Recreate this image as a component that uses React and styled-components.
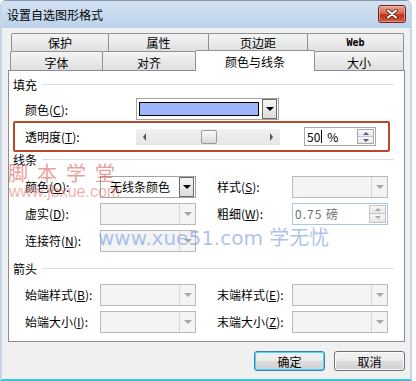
import React from 'react';
import styled, { createGlobalStyle, css } from 'styled-components';

const GlobalStyle = createGlobalStyle`
  html, body {
    margin: 0;
    padding: 0;
    background: #fff;
  }
  body {
    font-family: "Noto Sans CJK SC", "Liberation Sans", sans-serif;
    font-size: 12px;
    color: #000;
  }
  u {
    text-decoration: underline;
    text-underline-offset: 1px;
  }
`;

const Window = styled.div`
  position: relative;
  width: 412px;
  height: 381px;
  box-sizing: border-box;
  display: flex;
  flex-direction: column;
  background: #f0f0f0;
  border-top: 1px solid #8497ab;
  border-left: 2px solid #c4d6ea;
  border-right: 2px solid #c4d6ea;
  border-bottom: 2px solid #3ec2de;
  border-radius: 6px 6px 0 0;
  overflow: hidden;
`;

const TitleBar = styled.div`
  height: 27px;
  flex: none;
  display: flex;
  align-items: center;
  justify-content: space-between;
  padding: 0 2px 0 5px;
  margin: 0 -2px;
  background: linear-gradient(#d3e2f3, #bcd2ea);
`;

const Title = styled.span`
  font-size: 12px;
  color: #000;
  padding-left: 2px;
`;

const CloseButton = styled.div`
  width: 28px;
  height: 18px;
  box-sizing: border-box;
  margin-right: 4px;
  margin-top: -1px;
  border: 1px solid #6e2218;
  border-radius: 3px;
  background: linear-gradient(#e9a08f 0%, #d66a55 45%, #bf3318 55%, #cf5a40 100%);
  box-shadow: inset 0 0 0 1px rgba(255, 210, 200, 0.5);
  display: flex;
  align-items: center;
  justify-content: center;
`;

const Body = styled.div`
  flex: 1;
  display: flex;
  flex-direction: column;
  padding: 5px 5px 0 6px;
`;

const TabStrip = styled.div`
  display: flex;
  flex-direction: column;
  padding-right: 2px;
`;

const TabRow = styled.div`
  display: flex;
  align-items: flex-end;
  height: ${p => p.$h}px;
  padding-left: ${p => p.$indent}px;
`;

const Tab = styled.div`
  box-sizing: border-box;
  width: ${p => p.$w}px;
  height: ${p => p.$h}px;
  margin-right: -1px;
  display: flex;
  align-items: center;
  justify-content: center;
  font-size: 12px;
  border: 1px solid #8e9196;
  border-bottom: none;
  border-radius: 2px 2px 0 0;
  background: linear-gradient(#f4f4f4, #e0e0e0);
  padding-top: ${p => p.$pt || 0}px;
  ${p => p.$active && css`
    position: relative;
    z-index: 2;
    height: 21px;
    margin-bottom: -1px;
    background: #fff;
    padding-top: 0;
  `}
`;

const WebLabel = styled.span`
  font-family: "DejaVu Sans Mono", monospace;
  font-size: 10px;
  font-weight: bold;
`;

const Panel = styled.div`
  box-sizing: border-box;
  height: 272px;
  border: 1px solid #898c95;
  background: #fff;
  padding: 5px 0 0 4px;
  display: flex;
  flex-direction: column;
`;

const SectionHeader = styled.div`
  height: 16px;
  display: flex;
  align-items: center;
  margin-top: ${p => p.$mt || 0}px;
  &::after {
    content: '';
    flex: 1;
    height: 1px;
    margin: 1px 10px 0 5px;
    background: #d5dfe5;
  }
`;

const Row = styled.div`
  display: flex;
  align-items: center;
  height: ${p => p.$h || 27}px;
  margin-top: ${p => p.$mt || 0}px;
  padding-left: 12px;
`;

const Label = styled.div`
  width: ${p => p.$w || 75}px;
  flex: none;
  white-space: nowrap;
`;

const Gap = styled.div`
  width: 21px;
  flex: none;
`;

const Highlight = styled.div`
  box-sizing: border-box;
  width: 377px;
  height: 31px;
  margin-top: 1px;
  border: 2px solid #b84a2c;
  border-radius: 2px;
  display: flex;
  align-items: center;
  padding-left: 10px;
`;

const ComboBox = styled.div`
  box-sizing: border-box;
  width: ${p => p.$w}px;
  height: 22px;
  flex: none;
  display: flex;
  border: 1px solid ${p => (p.$disabled ? '#bababa' : '#a4a4a4')};
  background: ${p => (p.$disabled ? '#f4f4f4' : '#fff')};
`;

const ComboText = styled.div`
  flex: 1;
  display: flex;
  align-items: center;
  padding-left: 9px;
  font-size: 12px;
`;

const Swatch = styled.div`
  flex: 1;
  margin: 3px 3px 3px 2px;
  border: 1px solid #000;
  background: ${p => p.$color};
`;

const DropButton = styled.div`
  box-sizing: border-box;
  width: 16px;
  flex: none;
  display: flex;
  align-items: center;
  justify-content: center;
  ${p => (p.$disabled
    ? css`
      border-left: 1px solid #d6d6d6;
    `
    : css`
      width: 15px;
      margin: 0 1px 0 0;
      border: 1px solid #6a6a6a;
      background: linear-gradient(#f6f6f6, #dcdcdc);
    `)}
`;

const Tri = styled.span`
  width: 0;
  height: 0;
  ${p => p.$dir === 'down' && css`
    border-left: 4px solid transparent;
    border-right: 4px solid transparent;
    border-top: 4px solid ${p.$color};
  `}
  ${p => p.$dir === 'up' && css`
    border-left: 3px solid transparent;
    border-right: 3px solid transparent;
    border-bottom: 3px solid ${p.$color};
  `}
  ${p => p.$dir === 'smalldown' && css`
    border-left: 3px solid transparent;
    border-right: 3px solid transparent;
    border-top: 3px solid ${p.$color};
  `}
  ${p => p.$dir === 'left' && css`
    border-top: 4px solid transparent;
    border-bottom: 4px solid transparent;
    border-right: 3px solid ${p.$color};
  `}
  ${p => p.$dir === 'right' && css`
    border-top: 4px solid transparent;
    border-bottom: 4px solid transparent;
    border-left: 3px solid ${p.$color};
  `}
`;

const SliderTrack = styled.div`
  position: relative;
  box-sizing: border-box;
  width: 144px;
  height: 16px;
  flex: none;
  display: flex;
  align-items: center;
  justify-content: space-between;
  padding: 0 7px;
  background: linear-gradient(#f0f0f0, #e6e6e6);
`;

const SliderThumb = styled.div`
  position: absolute;
  top: 1px;
  box-sizing: border-box;
  width: 16px;
  height: 14px;
  border: 1px solid #9a9a9a;
  border-radius: 2px;
  background: linear-gradient(#fbfbfb, #dadada);
`;

const SpinBox = styled.div`
  box-sizing: border-box;
  width: ${p => p.$w}px;
  height: ${p => p.$h}px;
  flex: none;
  display: flex;
  margin-left: ${p => p.$ml || 0}px;
  border: 1px solid ${p => p.$border};
  background: #fff;
`;

const SpinText = styled.div`
  flex: 1;
  display: flex;
  align-items: center;
  padding-left: 2px;
  white-space: pre;
  color: ${p => p.$color || '#000'};
  letter-spacing: ${p => p.$ls || 0}px;
`;

const Caret = styled.span`
  display: inline-block;
  width: 1px;
  height: 13px;
  background: #000;
  margin: 0 5px 0 1px;
`;

const SpinButtons = styled.div`
  width: 15px;
  flex: none;
  display: flex;
  flex-direction: column;
  margin: 1px;
  border: 1px solid ${p => p.$border};
`;

const SpinHalf = styled.div`
  flex: 1;
  display: flex;
  align-items: center;
  justify-content: center;
  background: linear-gradient(#f8f8f8, #e6e6e6);
  & + & {
    border-top: 1px solid ${p => p.$border};
  }
`;

const ButtonRow = styled.div`
  display: flex;
  justify-content: flex-end;
  gap: 9px;
  margin-top: 9px;
`;

const DialogButton = styled.div`
  box-sizing: border-box;
  width: 71px;
  height: 20px;
  display: flex;
  align-items: center;
  justify-content: center;
  font-size: 12px;
  border-radius: 3px;
  border: 1px solid ${p => (p.$default ? '#3c7fb1' : '#707070')};
  background: linear-gradient(#f2f2f2 0%, #ebebeb 50%, #dddddd 51%, #cfcfcf 100%);
  box-shadow: ${p => (p.$default ? 'inset 0 0 0 1px #48d8fb' : 'inset 0 0 0 1px #fbfbfb')};
`;

const RedMark = styled.div`
  position: absolute;
  left: 6px;
  top: 160px;
  color: rgba(222, 70, 70, 0.55);
  pointer-events: none;
`;

const RedTitle = styled.div`
  font-size: 20px;
  line-height: 23px;
  letter-spacing: 9px;
`;

const RedUrl = styled.div`
  font-family: "Liberation Sans", Arial, sans-serif;
  font-size: 16px;
  line-height: 16px;
  margin-left: 1px;
  color: rgba(232, 110, 110, 0.55);
`;

const BlueMark = styled.div`
  position: absolute;
  left: 96px;
  top: 226px;
  font-family: "DejaVu Sans", "Noto Sans CJK SC", sans-serif;
  font-size: 20px;
  line-height: 22px;
  color: rgba(120, 152, 228, 0.6);
  white-space: pre;
  pointer-events: none;
`;

const Combo = ({ w, disabled, text }) => (
  <ComboBox $w={w} $disabled={disabled}>
    <ComboText>{text}</ComboText>
    <DropButton $disabled={disabled}>
      <Tri $dir="down" $color={disabled ? '#a6a6a6' : '#000'} />
    </DropButton>
  </ComboBox>
);

const Spinner = ({ border, arrow }) => (
  <SpinButtons $border={border}>
    <SpinHalf $border={border}><Tri $dir="up" $color={arrow} /></SpinHalf>
    <SpinHalf $border={border}><Tri $dir="smalldown" $color={arrow} /></SpinHalf>
  </SpinButtons>
);

const transparency = 50;

const App = () => (
  <>
    <GlobalStyle />
    <Window>
      <TitleBar>
        <Title>设置自选图形格式</Title>
        <CloseButton>
          <svg width="12" height="10" viewBox="0 0 12 10">
            <path d="M2 1.5 L10 8.5 M10 1.5 L2 8.5" stroke="#4a1a12" strokeWidth="3.6" strokeLinecap="round" />
            <path d="M2 1.5 L10 8.5 M10 1.5 L2 8.5" stroke="#fff" strokeWidth="2" strokeLinecap="round" />
          </svg>
        </CloseButton>
      </TitleBar>
      <Body>
        <TabStrip>
          <TabRow $h={18} $indent={3}>
            <Tab $w={98} $h={18}>保护</Tab>
            <Tab $w={101} $h={18}>属性</Tab>
            <Tab $w={100} $h={18}>页边距</Tab>
            <Tab $w={97} $h={18}><WebLabel>Web</WebLabel></Tab>
          </TabRow>
          <TabRow $h={19} $indent={2}>
            <Tab $w={93} $h={19} $pt={2}>字体</Tab>
            <Tab $w={94} $h={19} $pt={2}>对齐</Tab>
            <Tab $w={120} $h={19} $active>颜色与线条</Tab>
            <Tab $w={90} $h={19} $pt={2}>大小</Tab>
          </TabRow>
        </TabStrip>
        <Panel>
          <SectionHeader>填充</SectionHeader>
          <Row $h={22} $mt={6}>
            <Label $w={111}>颜色(<u>C</u>):</Label>
            <ComboBox $w={143}>
              <Swatch $color="#9db5fb" />
              <DropButton>
                <Tri $dir="down" $color="#000" />
              </DropButton>
            </ComboBox>
          </Row>
          <Highlight>
            <Label $w={111}>透明度(<u>T</u>):</Label>
            <SliderTrack>
              <Tri $dir="left" $color="#555" />
              <SliderThumb style={{ left: 14 + Math.round((101 * transparency) / 100) }} />
              <Tri $dir="right" $color="#555" />
            </SliderTrack>
            <SpinBox $w={72} $h={19} $ml={24} $border="#a9a9a9">
              <SpinText>{transparency}<Caret />%</SpinText>
              <Spinner border="#a9a9a9" arrow="#4b5f8d" />
            </SpinBox>
          </Highlight>
          <SectionHeader $mt={-1}>线条</SectionHeader>
          <Row $mt={6}>
            <Label>颜色(<u>O</u>):</Label>
            <Combo w={96} text="无线条颜色" />
            <Gap />
            <Label>样式(<u>S</u>):</Label>
            <Combo w={96} disabled />
          </Row>
          <Row>
            <Label>虚实(<u>D</u>):</Label>
            <Combo w={96} disabled />
            <Gap />
            <Label>粗细(<u>W</u>):</Label>
            <SpinBox $w={96} $h={22} $border="#aac5e8">
              <SpinText $color="#6f6f6f" $ls={1}>0.75 磅</SpinText>
              <Spinner border="#c4c4c4" arrow="#a8a8a8" />
            </SpinBox>
          </Row>
          <Row>
            <Label>连接符(<u>N</u>):</Label>
            <Combo w={96} disabled />
          </Row>
          <SectionHeader $mt={6}>箭头</SectionHeader>
          <Row $mt={5}>
            <Label>始端样式(<u>B</u>):</Label>
            <Combo w={96} disabled />
            <Gap />
            <Label>末端样式(<u>E</u>):</Label>
            <Combo w={96} disabled />
          </Row>
          <Row>
            <Label>始端大小(<u>I</u>):</Label>
            <Combo w={96} disabled />
            <Gap />
            <Label>末端大小(<u>Z</u>):</Label>
            <Combo w={96} disabled />
          </Row>
        </Panel>
        <ButtonRow>
          <DialogButton $default>确定</DialogButton>
          <DialogButton>取消</DialogButton>
        </ButtonRow>
      </Body>
      <RedMark>
        <RedTitle>脚本学堂</RedTitle>
        <RedUrl>www.jbxue.com</RedUrl>
      </RedMark>
      <BlueMark>www.xue51.com 学无忧</BlueMark>
    </Window>
  </>
);

export default App;
